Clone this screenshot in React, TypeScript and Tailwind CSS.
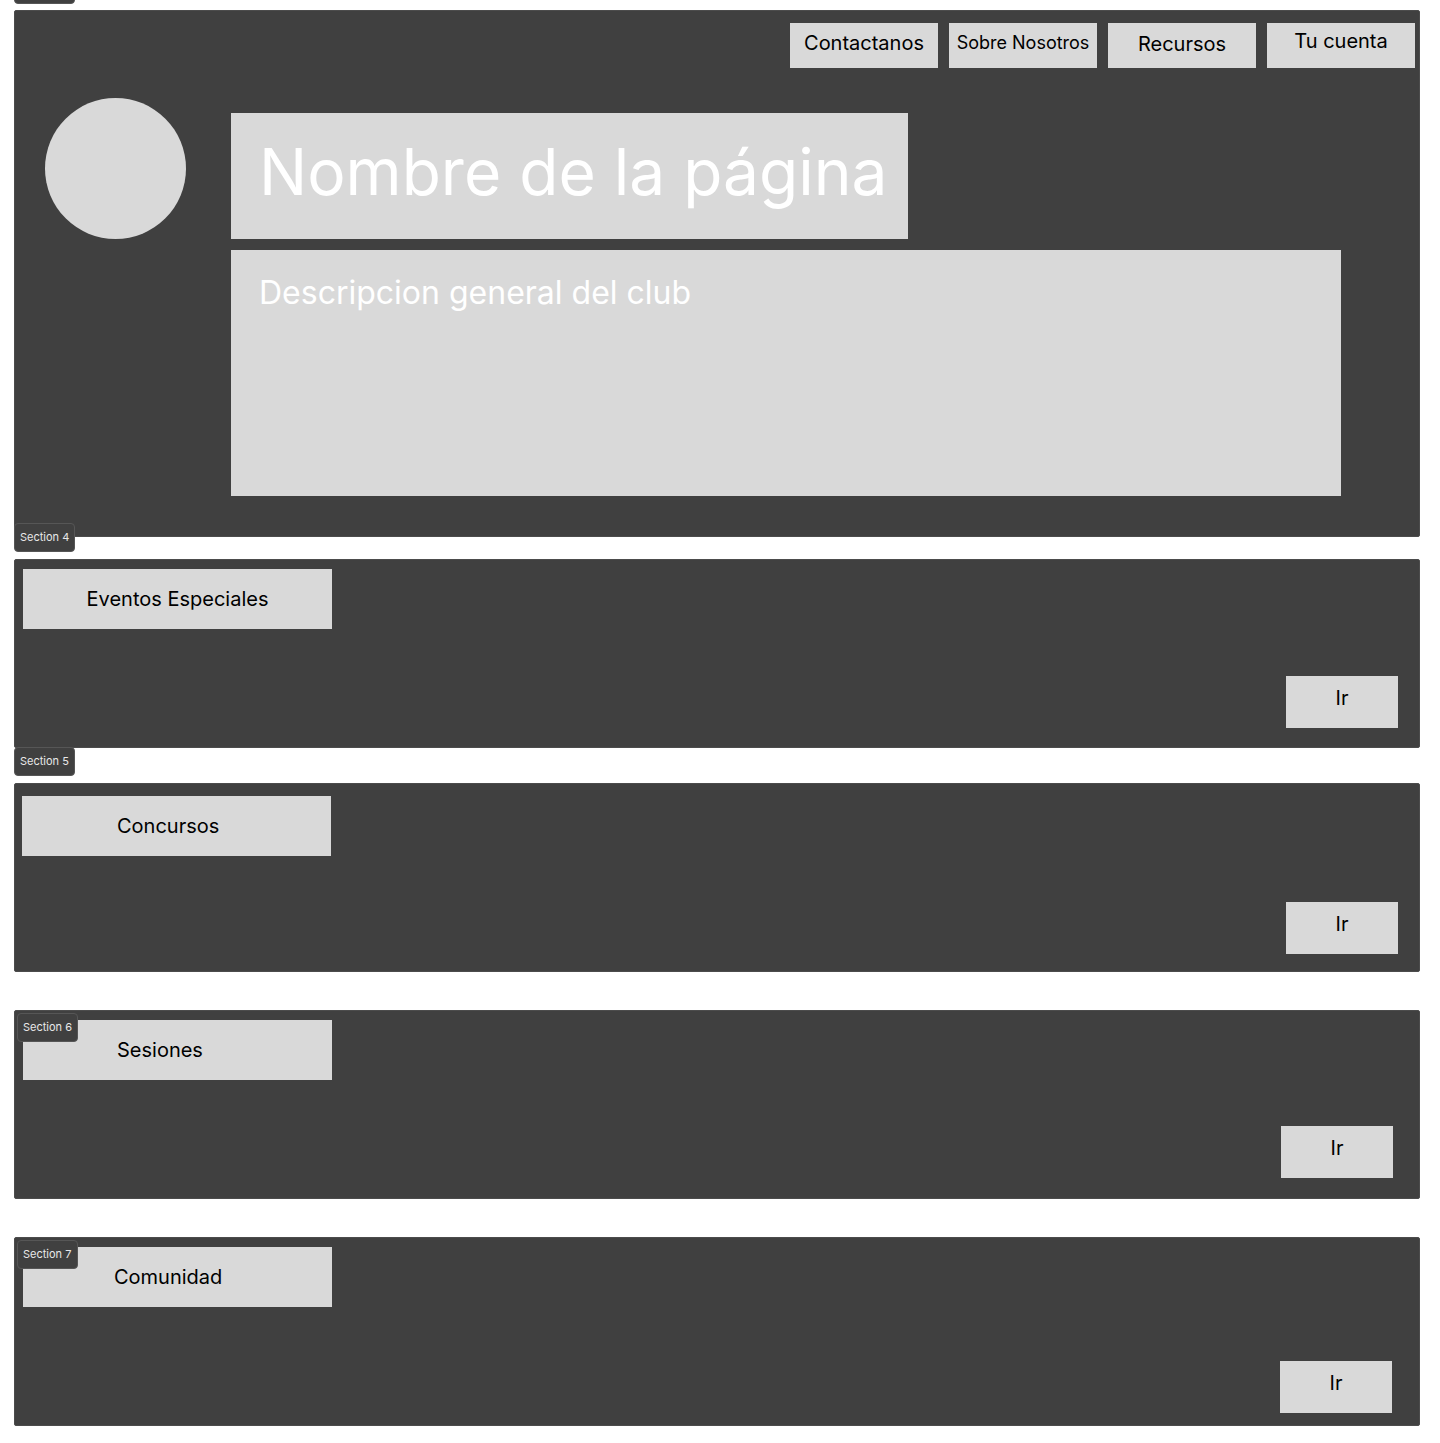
const navItems = [
  { label: 'Contactanos', cls: 'pt-[8px] text-[20px]' },
  { label: 'Sobre Nosotros', cls: 'pt-[8px] text-[18px]' },
  { label: 'Recursos', cls: 'pt-[9px] text-[20px]' },
  { label: 'Tu cuenta', cls: 'pt-[6px] text-[20px]' },
];

const Tag = ({ text, className }: { text: string; className: string }) => (
  <div
    className={`absolute z-10 h-[29px] w-[61px] rounded-[4px] border border-[#565656] bg-[#404040] pl-[5px] text-[11px] leading-[27px] text-[#e8e8e8] ${className}`}
  >
    {text}
  </div>
);

type SectionProps = {
  title: string;
  tag?: string;
  tagCls?: string;
  wrap: string;
  titleText: string;
  irBox: string;
};

const Section = ({ title, tag, tagCls, wrap, titleText, irBox }: SectionProps) => (
  <section className={`relative ml-[14px] mr-[20px] flex h-[189px] flex-col rounded-[2px] border border-[#4c4c4c] bg-[#404040] ${wrap}`}>
    {tag && <Tag text={tag} className={tagCls ?? ''} />}
    <div className={`flex h-[60px] w-[309px] items-center bg-[#d9d9d9] text-[20px] text-black ${titleText}`}>
      {title}
    </div>
    <button className={`flex h-[52px] w-[112px] justify-center self-end bg-[#d9d9d9] pt-[10px] text-[20px] leading-[24px] text-black ${irBox}`}>
      Ir
    </button>
  </section>
);

export default function App() {
  return (
    <div className="relative min-h-[1443px] overflow-hidden bg-white pb-[17px] font-['Inter','Liberation_Sans',sans-serif]">
      <div className="absolute left-[14px] top-[-25px] h-[29px] w-[61px] rounded-[4px] border border-[#565656] bg-[#404040]" />

      {/* hero */}
      <header className="relative ml-[14px] mr-[20px] mt-[10px] h-[527px] rounded-[2px] border border-[#4c4c4c] bg-[#404040]">
        <nav className="flex justify-end gap-[11px] pr-[4px] pt-[12px]">
          {navItems.map((n) => (
            <button
              key={n.label}
              className={`flex h-[45px] w-[148px] justify-center bg-[#d9d9d9] leading-[24px] text-black ${n.cls}`}
            >
              {n.label}
            </button>
          ))}
        </nav>
        <div className="flex">
          <div className="ml-[30px] mt-[30px] h-[141px] w-[141px] shrink-0 rounded-full bg-[#d9d9d9]" />
          <div className="ml-[45px] mt-[45px] flex flex-col gap-[11px]">
            <div className="h-[126px] w-[677px] bg-[#d9d9d9] pl-[28px] pt-[20px] text-[64px] leading-[77px] text-white">
              Nombre de la página
            </div>
            <div className="h-[246px] w-[1110px] bg-[#d9d9d9] pl-[28px] pt-[23px] text-[32px] leading-[39px] text-white">
              Descripcion general del club
            </div>
          </div>
        </div>
      </header>

      <Section
        title="Eventos Especiales"
        tag="Section 4"
        tagCls="left-[-1px] top-[-37px]"
        wrap="mt-[22px] pl-[8px] pt-[9px]"
        titleText="justify-center"
        irBox="mr-[21px] mt-[47px]"
      />
      <Section
        title="Concursos"
        tag="Section 5"
        tagCls="left-[-1px] top-[-37px]"
        wrap="mt-[35px] pl-[7px] pt-[12px]"
        titleText="pl-[95px]"
        irBox="mr-[21px] mt-[46px]"
      />
      <Section
        title="Sesiones"
        tag="Section 6"
        tagCls="left-[2px] top-[2px]"
        wrap="mt-[38px] pl-[8px] pt-[9px]"
        titleText="pl-[94px]"
        irBox="mr-[26px] mt-[46px]"
      />
      <Section
        title="Comunidad"
        tag="Section 7"
        tagCls="left-[2px] top-[2px]"
        wrap="mt-[38px] pl-[8px] pt-[9px]"
        titleText="pl-[91px]"
        irBox="mr-[27px] mt-[54px]"
      />
    </div>
  );
}
